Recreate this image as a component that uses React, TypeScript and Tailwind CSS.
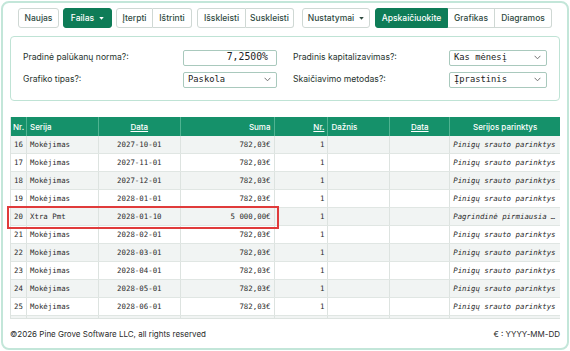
import React from "react";

const rows = [
  { n: 16, s: "Mokėjimas", d: "2027-10-01", a: "782,03€", o: "Pinigų srauto parinktys" },
  { n: 17, s: "Mokėjimas", d: "2027-11-01", a: "782,03€", o: "Pinigų srauto parinktys" },
  { n: 18, s: "Mokėjimas", d: "2027-12-01", a: "782,03€", o: "Pinigų srauto parinktys" },
  { n: 19, s: "Mokėjimas", d: "2028-01-01", a: "782,03€", o: "Pinigų srauto parinktys" },
  { n: 20, s: "Xtra Pmt", d: "2028-01-10", a: "5 000,00€", o: "Pagrindinė pirmiausia …", hl: true },
  { n: 21, s: "Mokėjimas", d: "2028-02-01", a: "782,03€", o: "Pinigų srauto parinktys" },
  { n: 22, s: "Mokėjimas", d: "2028-03-01", a: "782,03€", o: "Pinigų srauto parinktys" },
  { n: 23, s: "Mokėjimas", d: "2028-04-01", a: "782,03€", o: "Pinigų srauto parinktys" },
  { n: 24, s: "Mokėjimas", d: "2028-05-01", a: "782,03€", o: "Pinigų srauto parinktys" },
  { n: 25, s: "Mokėjimas", d: "2028-06-01", a: "782,03€", o: "Pinigų srauto parinktys" },
];

const Caret = () => (
  <svg width="5" height="3" viewBox="0 0 6 4" className="ml-[5px]">
    <path d="M0 0 L6 0 L3 3.5 Z" fill="currentColor" />
  </svg>
);

const Chevron = () => (
  <svg width="7" height="5" viewBox="0 0 7 5" className="text-[#666]">
    <path d="M0.6 0.8 L3.5 3.8 L6.4 0.8" fill="none" stroke="currentColor" strokeWidth="0.9" />
  </svg>
);

const btn = "h-[20px] flex items-center justify-center text-[8.5px] font-medium";
const white = "bg-white text-[#2f4a3f] border border-[#cfd8d4]";
const green = "bg-[#0e7c57] text-white border border-[#0e7c57]";

function Select({ value, w }: { value: string; w: string }) {
  return (
    <div className={`${w} h-[16px] flex items-center justify-between border border-[#a9c9bd] rounded-[2px] bg-white pl-[4px] pr-[5px]`}>
      <span className="font-['DejaVu_Sans_Mono',monospace] text-[8.8px] text-[#222]">{value}</span>
      <Chevron />
    </div>
  );
}

const cellB = "border-r border-[#dde3e0] h-full flex items-center";

export default function App() {
  return (
    <div className="w-[570px] h-[351px] bg-white p-[1px] font-['Inter',sans-serif]">
      <div className="h-full rounded-[8px] border-2 border-[#c3e6d9] flex flex-col">
        {/* toolbar */}
        <div className="flex items-center pt-[5px] pl-[15px]">
          <div className={`${btn} ${white} w-[41px] rounded-[3px]`}>Naujas</div>
          <div className={`${btn} ${green} w-[49px] rounded-[3px] ml-[4px]`}>
            Failas <Caret />
          </div>
          <div className="flex ml-[4px]">
            <div className={`${btn} ${white} w-[37px] rounded-l-[3px]`}>Įterpti</div>
            <div className={`${btn} ${white} w-[39px] border-l-0 rounded-r-[3px]`}>Ištrinti</div>
          </div>
          <div className="flex ml-[5px]">
            <div className={`${btn} ${white} w-[49px] rounded-l-[3px]`}>Išskleisti</div>
            <div className={`${btn} ${white} w-[48px] border-l-0 rounded-r-[3px]`}>Suskleisti</div>
          </div>
          <div className={`${btn} ${white} w-[68px] rounded-[3px] ml-[8px]`}>
            Nustatymai <Caret />
          </div>
          <div className="flex ml-[5px]">
            <div className={`${btn} ${green} w-[73px] rounded-l-[3px]`}>Apskaičiuokite</div>
            <div className={`${btn} ${white} w-[47px] border-l-0`}>Grafikas</div>
            <div className={`${btn} ${white} w-[57px] border-l-0 rounded-r-[3px]`}>Diagramos</div>
          </div>
        </div>

        {/* form panel */}
        <div className="mx-[7px] mt-[8px] h-[65px] border border-[#bfe3d5] rounded-[4px] bg-white flex flex-col justify-center gap-[6px] text-[8.6px] text-[#26332d]">
          <div className="flex items-center h-[16px]">
            <div className="w-[172px] pl-[12px]">Pradinė palūkanų norma?:</div>
            <div className="w-[94px] h-[16px] border border-[#a9c9bd] rounded-[2px] flex items-center justify-end pr-[8px] font-['DejaVu_Sans_Mono',monospace] text-[9.8px] text-[#222]">
              7,2500%
            </div>
            <div className="w-[172px] pl-[16px]">Pradinis kapitalizavimas?:</div>
            <Select value="Kas mėnesį" w="w-[98px]" />
          </div>
          <div className="flex items-center h-[16px]">
            <div className="w-[172px] pl-[12px]">Grafiko tipas?:</div>
            <Select value="Paskola" w="w-[94px]" />
            <div className="w-[172px] pl-[16px]">Skaičiavimo metodas?:</div>
            <Select value="Įprastinis" w="w-[98px]" />
          </div>
        </div>

        {/* table */}
        <div className="mx-[7px] mt-[16px] border-l border-[#dde3e0]">
          <div className="flex h-[19px] bg-[#15916a] text-white text-[8px] font-medium">
            <div className="w-[16px] flex items-center pl-[2px] border-r border-[#4fb391]">Nr.</div>
            <div className="w-[72px] flex items-center pl-[3px] border-r border-[#4fb391]">Serija</div>
            <div className="w-[82px] flex items-center justify-center underline border-r border-[#4fb391]">Data</div>
            <div className="w-[94px] flex items-center justify-end pr-[3px] border-r border-[#4fb391]">Suma</div>
            <div className="w-[54px] flex items-center justify-end pr-[3px] underline border-r border-[#4fb391]">Nr.</div>
            <div className="w-[62px] flex items-center pl-[3px] border-r border-[#4fb391]">Dažnis</div>
            <div className="w-[60px] flex items-center justify-center underline border-r border-[#4fb391]">Data</div>
            <div className="w-[110px] flex items-center justify-center">Serijos parinktys</div>
          </div>
          {rows.map((r, i) => (
            <div
              key={r.n}
              className={`${r.hl ? "relative" : ""} flex h-[18px] border-b border-[#e0e6e3] font-['DejaVu_Sans_Mono',monospace] text-[7.4px] text-[#2b2b2b] ${i % 2 === 0 ? "bg-[#f1f4f3]" : "bg-white"}`}
            >
              <div className={`w-[16px] pl-[3px] ${cellB}`}>{r.n}</div>
              <div className={`w-[72px] pl-[3px] ${cellB}`}>{r.s}</div>
              <div className={`w-[82px] justify-center ${cellB}`}>{r.d}</div>
              <div className={`w-[94px] justify-end pr-[3px] ${cellB}`}>{r.a}</div>
              <div className={`w-[54px] justify-end pr-[3px] ${cellB}`}>1</div>
              <div className={`w-[62px] ${cellB}`}></div>
              <div className={`w-[60px] ${cellB}`}></div>
              <div className="w-[110px] pl-[3px] h-full flex items-center italic whitespace-nowrap overflow-hidden">{r.o}</div>
              {r.hl && (
                <div className="absolute z-10 left-[-4px] top-[-2px] w-[272px] h-[23px] border-2 border-[#e03b3b] pointer-events-none" />
              )}
            </div>
          ))}
          <div className="flex h-[3px] border-b border-[#dde3e0] bg-[#f1f4f3]">
            <div className="w-[16px] border-r border-[#dde3e0]"></div>
            <div className="w-[72px] border-r border-[#dde3e0]"></div>
            <div className="w-[82px] border-r border-[#dde3e0]"></div>
            <div className="w-[94px] border-r border-[#dde3e0]"></div>
            <div className="w-[54px] border-r border-[#dde3e0]"></div>
            <div className="w-[62px] border-r border-[#dde3e0]"></div>
            <div className="w-[60px] border-r border-[#dde3e0]"></div>
            <div className="w-[110px]"></div>
          </div>
        </div>

        {/* footer */}
        <div className="flex-1 flex items-center justify-between px-[7px] text-[8px] text-[#2a2a2a]">
          <span>©2026 Pine Grove Software LLC, all rights reserved</span>
          <span>€ : YYYY-MM-DD</span>
        </div>
      </div>
    </div>
  );
}
